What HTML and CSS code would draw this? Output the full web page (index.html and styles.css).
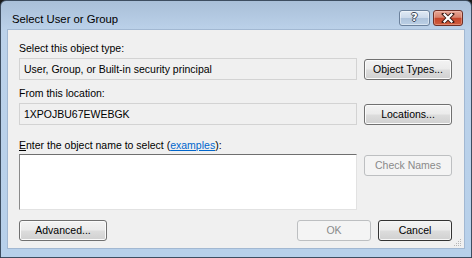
FILE: index.html
```html
<!DOCTYPE html>
<html>
<head>
<meta charset="utf-8">
<link rel="stylesheet" href="styles.css">
</head>
<body>
<div class="window">
  <div class="titlebar">
    <div class="title">Select User or Group</div>
    <div class="caption-btns">
      <div class="cap help"><span>?</span></div>
      <div class="cap close">
        <svg width="16" height="10" viewBox="0 0 16 10">
          <path d="M4 1 L12 9 M12 1 L4 9" stroke="#3a1a14" stroke-width="4" stroke-linecap="square"/>
          <path d="M4.5 1.5 L11.5 8.5 M11.5 1.5 L4.5 8.5" stroke="#ffffff" stroke-width="2.2" stroke-linecap="square"/>
        </svg>
      </div>
    </div>
  </div>
  <div class="client">
    <div class="label r1">Select this object type:</div>
    <div class="field r2">User, Group, or Built-in security principal</div>
    <div class="btn r2 side">Object Types...</div>
    <div class="label r3">From this location:</div>
    <div class="field r4">1XPOJBU67EWEBGK</div>
    <div class="btn r4 side">Locations...</div>
    <div class="label r5"><span class="u">E</span>nter the object name to select (<a class="link">examples</a>):</div>
    <div class="textarea r6"></div>
    <div class="btn r6 side disabled">Check Names</div>
    <div class="footer">
      <div class="btn adv">Advanced...</div>
      <div class="right">
        <div class="btn small disabled">OK</div>
        <div class="btn small default">Cancel</div>
      </div>
    </div>
    <svg class="grip" width="8" height="8" viewBox="0 0 8 8">
      <g fill="#b8b8b8">
        <rect x="6" y="0" width="1" height="1"/>
        <rect x="4" y="2" width="1" height="1"/><rect x="6" y="2" width="1" height="1"/>
        <rect x="2" y="4" width="1" height="1"/><rect x="4" y="4" width="1" height="1"/><rect x="6" y="4" width="1" height="1"/>
        <rect x="0" y="6" width="1" height="1"/><rect x="2" y="6" width="1" height="1"/><rect x="4" y="6" width="1" height="1"/><rect x="6" y="6" width="1" height="1"/>
      </g>
    </svg>
  </div>
</div>
</body>
</html>
```

FILE: styles.css
```css
html, body {
  margin: 0;
  padding: 0;
  background: #1a1a1a;
}
.window {
  width: 472px;
  height: 258px;
  box-sizing: border-box;
  border: 1px solid #3d4d60;
  border-radius: 6px 6px 0 0;
  background: linear-gradient(#a9bfd8 0px, #bcd2ea 30px, #b7d0ea 100%);
  display: flex;
  flex-direction: column;
  font-family: "Liberation Sans", Arial, sans-serif;
  font-size: 10.5px;
  color: #000;
}
.titlebar {
  height: 29px;
  display: flex;
  justify-content: space-between;
  align-items: flex-start;
  padding: 0 8px 0 11px;
}
.title {
  font-size: 11.3px;
  line-height: 14px;
  padding-top: 11px;
  color: #000;
}
.caption-btns {
  display: flex;
  gap: 3px;
  margin-top: 9px;
}
.cap {
  height: 16px;
  box-sizing: border-box;
  border-radius: 3px;
  display: flex;
  align-items: center;
  justify-content: center;
}
.help {
  width: 31px;
  border: 1px solid #6b819c;
  background: linear-gradient(#e0eaf5 0%, #cbd9ea 50%, #aec3db 52%, #bcd0e6 100%);
  box-shadow: inset 0 0 0 1px rgba(255,255,255,0.45);
}
.help span {
  font-family: "DejaVu Sans", sans-serif;
  font-weight: bold;
  font-size: 11px;
  line-height: 12px;
  color: #fff;
  text-shadow: 1px 0 0 #3b4656, -1px 0 0 #3b4656, 0 1px 0 #3b4656, 0 -1px 0 #3b4656;
}
.close {
  width: 30px;
  border: 1px solid #6e2f26;
  background: linear-gradient(#e7a797 0%, #d8826d 45%, #c5452b 52%, #cf5e3e 100%);
  box-shadow: inset 0 0 0 1px rgba(255,220,210,0.35);
}
.client {
  position: relative;
  flex: 1;
  margin: 0 7px 9px 7px;
  background: #f0f0f0;
  box-shadow: 0 0 0 1px #a2b8d2;
  display: grid;
  grid-template-columns: 338px 88px;
  column-gap: 7px;
  grid-auto-rows: auto;
  padding: 12px 12px 0 11px;
  align-content: start;
}
.label {
  grid-column: 1;
  line-height: 13px;
  white-space: nowrap;
}
.r1 { grid-row: 1; }
.r2 { grid-row: 2; margin-top: 3px; }
.r3 { grid-row: 3; margin-top: 7px; }
.r4 { grid-row: 4; margin-top: 3px; }
.r5 { grid-row: 5; margin-top: 14px; }
.r6 { grid-row: 6; margin-top: 2px; }
.field {
  grid-column: 1;
  height: 22px;
  box-sizing: border-box;
  border: 1px solid #d3d3d3;
  background: #f0f0f0;
  padding: 0 4px;
  line-height: 20px;
  white-space: nowrap;
  align-self: start;
}
.textarea {
  grid-column: 1;
  height: 56px;
  box-sizing: border-box;
  background: #fff;
  border: 1px solid;
  border-color: #6f6f6f #e2e2e2 #e2e2e2 #8a8a8a;
}
.btn {
  height: 21px;
  box-sizing: border-box;
  border: 1px solid #707070;
  border-radius: 3px;
  background: linear-gradient(#f3f3f3 0%, #ebebeb 48%, #dddddd 52%, #d0d0d0 100%);
  box-shadow: inset 0 0 0 1px #fbfbfb;
  display: flex;
  align-items: center;
  justify-content: center;
  line-height: 13px;
  white-space: nowrap;
  color: #000;
}
.btn.side {
  grid-column: 2;
  align-self: start;
}
.r2.side { margin-top: 4px; }
.r4.side { margin-top: 4px; }
.r6.side { margin-top: 3px; }
.btn.disabled {
  border-color: #bdbfc1;
  background: #f4f4f4;
  box-shadow: none;
  color: #8a8a8a;
}
.btn.default {
  border-color: #333;
  box-shadow: inset 0 0 0 1px #f6f6f6;
}
.footer {
  grid-column: 1 / 3;
  grid-row: 7;
  display: flex;
  justify-content: space-between;
  margin-top: 10px;
}
.adv { width: 88px; }
.right {
  display: flex;
  gap: 7px;
}
.small { width: 74px; }
.u { text-decoration: underline; }
.link {
  color: #0066cc;
  text-decoration: underline;
}
.grip {
  position: absolute;
  right: 2px;
  bottom: 1px;
}
```
